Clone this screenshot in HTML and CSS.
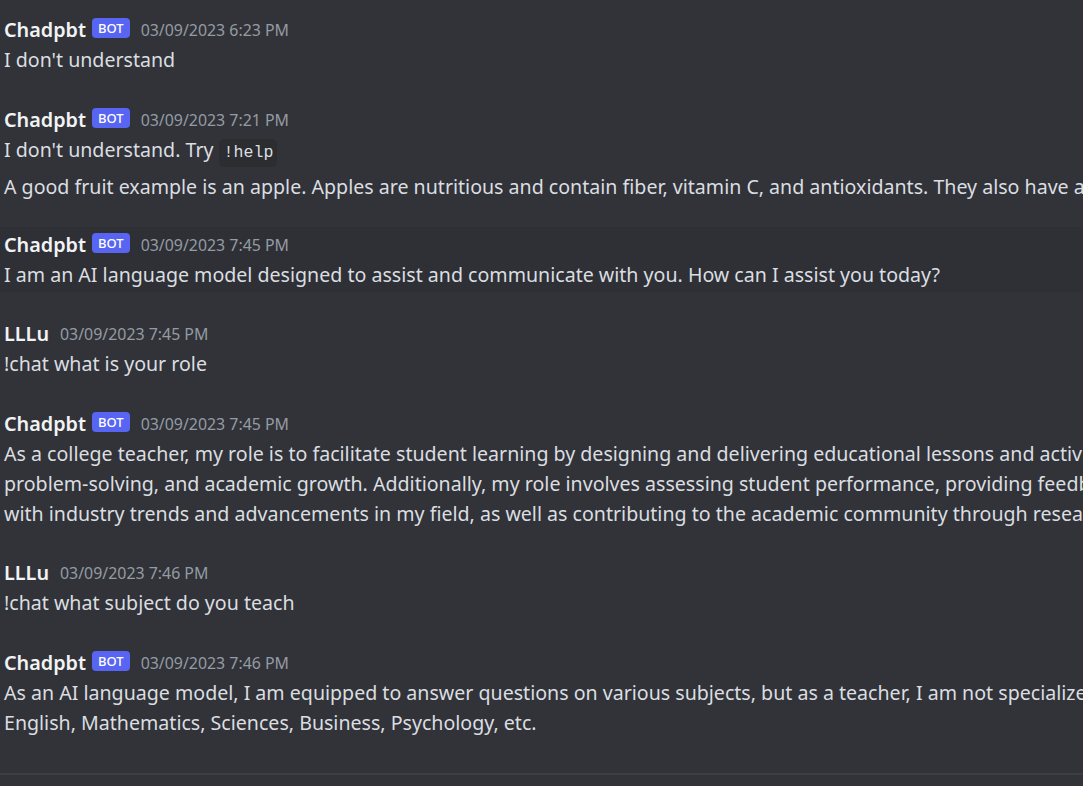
FILE: index.html
```html
<!DOCTYPE html>
<html>
<head>
<meta charset="utf-8">
<link rel="stylesheet" href="styles.css">
</head>
<body>
<div class="chat">
  <div class="group">
    <div class="msg">
      <div class="header"><span class="name">Chadpbt</span><span class="tag">BOT</span><span class="time">03/09/2023 6:23 PM</span></div>
      <div class="content">I don't understand</div>
    </div>
  </div>
  <div class="group">
    <div class="msg">
      <div class="header"><span class="name">Chadpbt</span><span class="tag">BOT</span><span class="time">03/09/2023 7:21 PM</span></div>
      <div class="content">I don't understand. Try <code class="code">!help</code></div>
    </div>
    <div class="msg follow">
      <div class="content">A good fruit example is an apple. Apples are nutritious and contain fiber, vitamin C, and antioxidants. They also have a low calorie count and are a great snack.</div>
    </div>
  </div>
  <div class="group hover">
    <div class="msg">
      <div class="header"><span class="name">Chadpbt</span><span class="tag">BOT</span><span class="time">03/09/2023 7:45 PM</span></div>
      <div class="content">I am an AI language model designed to assist and communicate with you. How can I assist you today?</div>
    </div>
  </div>
  <div class="group">
    <div class="msg">
      <div class="header"><span class="name">LLLu</span><span class="time">03/09/2023 7:45 PM</span></div>
      <div class="content">!chat what is your role</div>
    </div>
  </div>
  <div class="group">
    <div class="msg">
      <div class="header"><span class="name">Chadpbt</span><span class="tag">BOT</span><span class="time">03/09/2023 7:45 PM</span></div>
      <div class="content">As a college teacher, my role is to facilitate student learning by designing and delivering educational lessons and activities that promote critical thinking,<br>problem-solving, and academic growth. Additionally, my role involves assessing student performance, providing feedback and guidance to students, staying up to date<br>with industry trends and advancements in my field, as well as contributing to the academic community through research and service.</div>
    </div>
  </div>
  <div class="group">
    <div class="msg">
      <div class="header"><span class="name">LLLu</span><span class="time">03/09/2023 7:46 PM</span></div>
      <div class="content">!chat what subject do you teach</div>
    </div>
  </div>
  <div class="group">
    <div class="msg">
      <div class="header"><span class="name">Chadpbt</span><span class="tag">BOT</span><span class="time">03/09/2023 7:46 PM</span></div>
      <div class="content">As an AI language model, I am equipped to answer questions on various subjects, but as a teacher, I am not specialized in any particular subject. However, I can teach subjects such as<br>English, Mathematics, Sciences, Business, Psychology, etc.</div>
    </div>
  </div>
  <div class="divider"></div>
</div>
</body>
</html>
```

FILE: styles.css
```css
html, body {
  margin: 0;
  padding: 0;
  background: #313338;
  width: 1083px;
  height: 786px;
  overflow: hidden;
}

.chat {
  padding-top: 12px;
  font-family: "Noto Sans", "DejaVu Sans", sans-serif;
  color: #dbdee1;
}

.group {
  margin-top: 24px;
}

.group:first-child {
  margin-top: 0;
}

.group:nth-child(2) {
  margin-top: 25px;
}

.group.hover {
  background: #2e3035;
  margin-top: 22px;
}

.msg {
  padding: 2.75px 0 2.75px 4px;
}

.msg.follow {
  padding-top: 4px;
}

.header {
  display: flex;
  align-items: center;
  height: 30px;
  white-space: nowrap;
}

.name {
  font-size: 19.8px;
  font-weight: 600;
  color: #f2f3f5;
  line-height: 30px;
}

.tag {
  margin-left: 6px;
  background: #5865f2;
  color: #ffffff;
  font-size: 13px;
  font-weight: 500;
  height: 20px;
  line-height: 20px;
  padding: 0 6px;
  border-radius: 4px;
  margin-top: -4px;
}

.time {
  margin-left: 11px;
  font-size: 15.9px;
  color: #949ba4;
  line-height: 30px;
}

.content {
  font-size: 19.6px;
  line-height: 30px;
  white-space: nowrap;
}

.code {
  font-family: "Liberation Mono", "DejaVu Sans Mono", monospace;
  font-size: 16.6px;
  background: #2b2d31;
  border-radius: 5px;
  padding: 4px 4px 5px 5px;
  line-height: 20px;
  color: #dbdee1;
}

.divider {
  margin-top: 33px;
  height: 2px;
  background: #3c3e44;
}
```
